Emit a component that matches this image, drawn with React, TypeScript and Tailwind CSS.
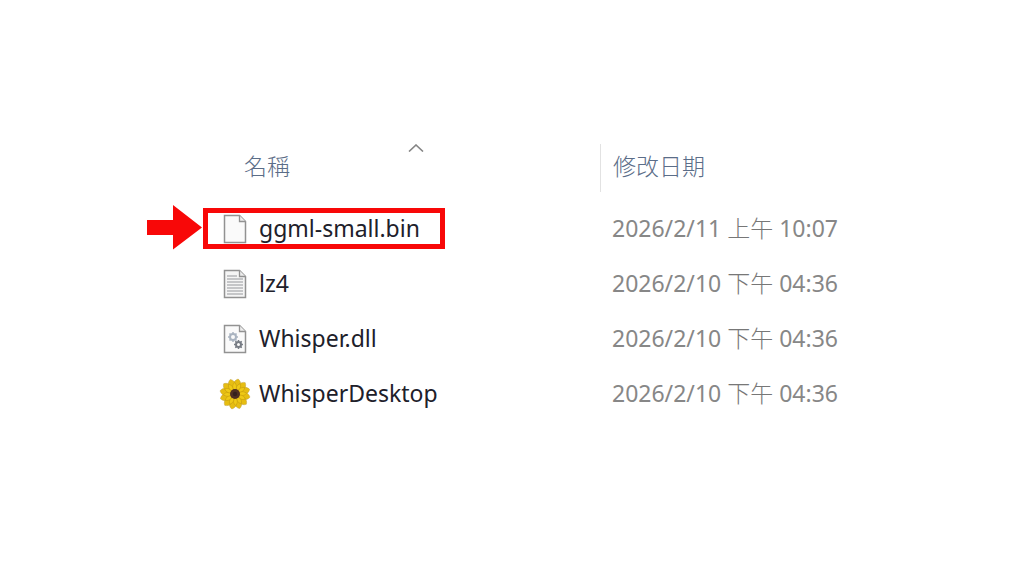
import type { ReactNode } from "react"

interface FileRow {
  name: string
  date: string
  period: string
  time: string
  icon: ReactNode
  marked?: boolean
}

const PETALS = Array.from({ length: 12 }, (_, i) => i * 30)
const TEETH = Array.from({ length: 8 }, (_, i) => i * 45)
const TEXT_LINES = [8, 11, 14, 17, 20, 23, 26]

const FILES: FileRow[] = [
  { name: "ggml-small.bin", date: "2026/2/11", period: "上午", time: "10:07", icon: <BlankIcon />, marked: true },
  { name: "lz4", date: "2026/2/10", period: "下午", time: "04:36", icon: <TextIcon /> },
  { name: "Whisper.dll", date: "2026/2/10", period: "下午", time: "04:36", icon: <LibraryIcon /> },
  { name: "WhisperDesktop", date: "2026/2/10", period: "下午", time: "04:36", icon: <SunflowerIcon /> },
]

export default function App() {
  return (
    <main className="min-h-screen bg-white pt-36 pl-[203px] font-['Noto_Sans','Noto_Sans_CJK_TC',sans-serif] text-[23px] leading-8">
      <table className="w-full table-fixed border-collapse text-left">
        <thead>
          <tr className="h-[57px] align-top font-['Noto_Sans_CJK_TC',sans-serif] text-[#5b6d88]">
            <th className="relative w-[397px] p-0 font-light" aria-sort="ascending">
              <button type="button" className="flex h-12 items-center pb-1.5 pl-[41px]">名稱</button>
              <svg className="absolute top-0 left-[205px]" width="16" height="8" viewBox="0 0 16 8" fill="none" aria-hidden="true">
                <path d="M1 7.5 8 1l7 6.5" stroke="#858585" strokeWidth="1.6" />
              </svg>
            </th>
            <th className="p-0 font-light">
              <button type="button" className="flex h-12 items-center border-l border-[#e2e2e2] pb-1.5 pl-3">修改日期</button>
            </th>
          </tr>
        </thead>
        <tbody>
          {FILES.map((file) => (
            <tr key={file.name} className="h-[55px]">
              <td className="relative p-0">
                <div className="flex items-center gap-2 pl-4 text-[#20202a]">
                  {file.icon}
                  <span className="pb-0.5">{file.name}</span>
                </div>
                {file.marked && <Marker />}
              </td>
              <td className="p-0 pb-0.5 pl-3 text-[#878787]">
                {file.date} <span className="font-light text-[#777777]">{file.period}</span> {file.time}
              </td>
            </tr>
          ))}
        </tbody>
      </table>
    </main>
  )
}

// red frame round the file name, with the arrow to its left
function Marker() {
  return (
    <>
      <div className="absolute top-[7px] left-0 h-[41px] w-[242px] border-5 border-[#f80808]" />
      <svg className="absolute top-1 right-full" width="56" height="45" viewBox="0 0 56 45" fill="#f80808" aria-hidden="true">
        <path d="M0 15h26V0l29 22.5L26 44.5V30H0z" />
      </svg>
    </>
  )
}

function Page({ fill = "#fafafa", children }: { fill?: string; children?: ReactNode }) {
  return (
    <svg className="shrink-0" width="32" height="32" viewBox="0 0 32 32" aria-hidden="true">
      <path d="M5.5 2.5H20.5L26.5 8.500V29.500H5.500z" fill={fill} stroke="#929292" strokeWidth="1.500" />
      <path d="M20.500 2.500V8.500H26.500" fill="#ededed" stroke="#929292" strokeWidth="1.300" />
      {children}
    </svg>
  )
}

function BlankIcon() {
  return <Page />
}

function TextIcon() {
  return (
    <Page fill="#f5f5f5">
      {TEXT_LINES.map((y) => (
        <path key={y} d={`M8 ${y}H${y < 9 ? 18 : 24}`} stroke="#b0b2b5" strokeWidth="1.400" />
      ))}
    </Page>
  )
}

function Gear({ x, y, r, color }: { x: number; y: number; r: number; color: string }) {
  return (
    <g transform={`translate(${x} ${y})`} stroke={color} fill="none">
      <circle r={r} strokeWidth="2" />
      {TEETH.map((angle) => (
        <path key={angle} d={`M0 ${-r - 0.5}V${-r - 2}`} strokeWidth="1.500" transform={`rotate(${angle})`} />
      ))}
    </g>
  )
}

function LibraryIcon() {
  return (
    <Page>
      <Gear x={14} y={14} r={3} color="#a9b3c0" />
      <Gear x={19.5} y={21.5} r={2.5} color="#777c84" />
    </Page>
  )
}

function SunflowerIcon() {
  return (
    <svg className="shrink-0" width="32" height="32" viewBox="0 0 32 32" aria-hidden="true">
      <g transform="translate(16 16)">
        <circle r="11" fill="#dcb311" />
        {PETALS.map((angle) => (
          <path key={angle} d="M0-4C-5-7-4.500-13 0-15.300 4.500-13 5-7 0-4z" fill="#e6bd12" stroke="#b99a3a" strokeWidth="0.400" transform={`rotate(${angle + 12})`} />
        ))}
        {PETALS.map((angle) => (
          <path key={angle} d="M0-3C-2.500-6-2.500-9 0-11.500 2.500-9 2.500-6 0-3z" fill="#efc916" stroke="#b98f0c" strokeWidth="0.400" transform={`rotate(${angle + 27})`} />
        ))}
        <circle r="5" fill="#4f2e22" />
        <circle r="2.200" fill="#35201d" />
      </g>
    </svg>
  )
}
